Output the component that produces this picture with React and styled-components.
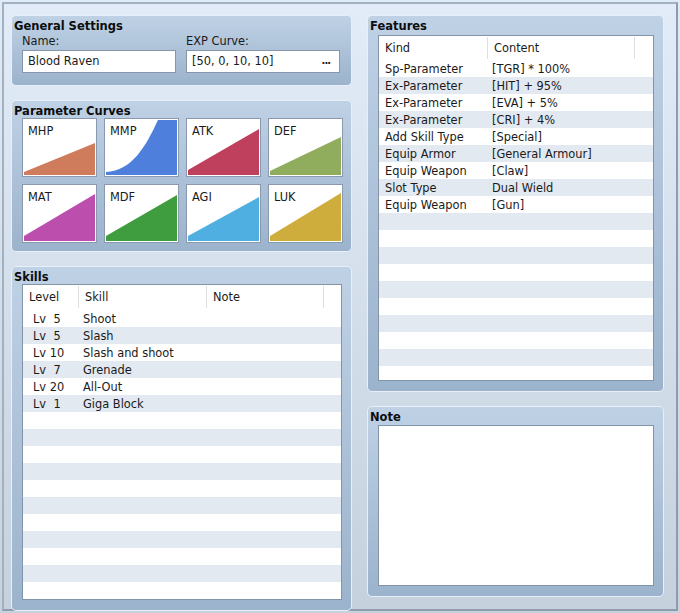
import React from 'react'
import styled, { createGlobalStyle } from 'styled-components'

const GlobalStyle = createGlobalStyle`
    body {
        margin: 0;
        height: 613px;
        background: linear-gradient(#e0ebf8, #c6d2de);
        font-family: "DejaVu Sans", Verdana, sans-serif;
        font-size: 11.4px;
        color: #1a1a1a;
        overflow: hidden;
    }
`

const curves = [
    { name: 'MHP', color: '#cf7c5d', path: 'M0,55 L0,52 L71,23 L71,55 Z' },
    { name: 'MMP', color: '#4f7fdd', path: 'M0,55 L0,52 C26,51 40,26 52,0 L71,0 L71,55 Z' },
    { name: 'ATK', color: '#bf405c', path: 'M0,55 L0,50 L71,9 L71,55 Z' },
    { name: 'DEF', color: '#8fad5d', path: 'M0,55 L0,51 L71,17 L71,55 Z' },
    { name: 'MAT', color: '#bc4eae', path: 'M0,55 L0,50 L71,8 L71,55 Z' },
    { name: 'MDF', color: '#3f9d3f', path: 'M0,55 L0,50 L71,9 L71,55 Z' },
    { name: 'AGI', color: '#4fafe0', path: 'M0,55 L0,50 L71,11 L71,55 Z' },
    { name: 'LUK', color: '#cfad3d', path: 'M0,55 L0,50 L71,7 L71,55 Z' },
]

const skills = [
    ['5', 'Shoot'],
    ['5', 'Slash'],
    ['10', 'Slash and shoot'],
    ['7', 'Grenade'],
    ['20', 'All-Out'],
    ['1', 'Giga Block'],
]

const features = [
    ['Sp-Parameter', '[TGR] * 100%'],
    ['Ex-Parameter', '[HIT] + 95%'],
    ['Ex-Parameter', '[EVA] + 5%'],
    ['Ex-Parameter', '[CRI] + 4%'],
    ['Add Skill Type', '[Special]'],
    ['Equip Armor', '[General Armour]'],
    ['Equip Weapon', '[Claw]'],
    ['Slot Type', 'Dual Wield'],
    ['Equip Weapon', '[Gun]'],
]

const SKILL_COLS = '56px 128px 117px 1fr'
const FEATURE_COLS = '109px 147px 1fr'

function fill(list, count) {
    const rows = [...list]
    while (rows.length < count) rows.push(null)
    return rows
}

function App() {
    return (
        <>
            <GlobalStyle />
            <Frame>
                <Column>
                    <Panel $height={71}>
                        <Title>General Settings</Title>
                        <Fields>
                            <Field>
                                <Label>Name:</Label>
                                <Input>Blood Raven</Input>
                            </Field>
                            <Field>
                                <Label>EXP Curve:</Label>
                                <Input>
                                    [50, 0, 10, 10]
                                    <Dots>...</Dots>
                                </Input>
                            </Field>
                        </Fields>
                    </Panel>
                    <Panel $height={152}>
                        <Title>Parameter Curves</Title>
                        <CurveGrid>
                            {curves.map((c) => (
                                <CurveCard key={c.name}>
                                    <CurveChart viewBox="0 0 71 55" preserveAspectRatio="none">
                                        <path d={c.path} fill={c.color} />
                                    </CurveChart>
                                    <CurveName>{c.name}</CurveName>
                                </CurveCard>
                            ))}
                        </CurveGrid>
                    </Panel>
                    <Panel $grow>
                        <Title>Skills</Title>
                        <ListBox>
                            <HeaderRow $cols={SKILL_COLS} $height={25}>
                                <HeaderCell>Level</HeaderCell>
                                <HeaderCell>Skill</HeaderCell>
                                <HeaderCell>Note</HeaderCell>
                                <HeaderCell $last />
                            </HeaderRow>
                            {fill(skills, 17).map((s, i) => (
                                <Row key={i} $cols={SKILL_COLS} $striped={i % 2 === 1}>
                                    {s && (
                                        <>
                                            <LevelCell>
                                                Lv<LevelNum>{s[0]}</LevelNum>
                                            </LevelCell>
                                            <Cell>{s[1]}</Cell>
                                        </>
                                    )}
                                </Row>
                            ))}
                        </ListBox>
                    </Panel>
                </Column>
                <Column>
                    <Panel $height={377}>
                        <Title>Features</Title>
                        <ListBox $top={2}>
                            <HeaderRow $cols={FEATURE_COLS} $height={24}>
                                <HeaderCell>Kind</HeaderCell>
                                <HeaderCell>Content</HeaderCell>
                                <HeaderCell $last />
                            </HeaderRow>
                            {fill(features, 20).map((f, i) => (
                                <Row key={i} $cols={FEATURE_COLS} $striped={i % 2 === 1}>
                                    {f && (
                                        <>
                                            <Cell $pad={6}>{f[0]}</Cell>
                                            <Cell>{f[1]}</Cell>
                                        </>
                                    )}
                                </Row>
                            ))}
                        </ListBox>
                    </Panel>
                    <Panel $grow>
                        <Title>Note</Title>
                        <NoteBox $top={1} />
                    </Panel>
                </Column>
            </Frame>
        </>
    )
}

export default App

const Frame = styled.div`
    margin: 2px;
    width: 676px;
    height: 609px;
    box-sizing: border-box;
    border: 2px solid;
    border-color: #a3b0c0 #8f9cad #8f9cad #a3b0c0;
    background: linear-gradient(#e1ecf8, #c5d1dd);
    padding: 11px 0 0 7px;
    display: grid;
    grid-template-columns: 341px 297px;
    column-gap: 15px;
`

const Column = styled.div`
    display: flex;
    flex-direction: column;
    gap: 14px;
    height: 582px;
`

const Panel = styled.section`
    box-sizing: border-box;
    height: ${(p) => (p.$height ? `${p.$height}px` : 'auto')};
    flex: ${(p) => (p.$grow ? '1' : 'none')};
    border: 1px solid #e8eff8;
    border-radius: 5px;
    background: linear-gradient(#bfd1e5, #9bb3cc);
    padding: 0 9px 10px 10px;
    display: flex;
    flex-direction: column;
`

const Title = styled.h3`
    margin: 0 0 0 -8px;
    padding-top: 4px;
    height: 13px;
    line-height: 13px;
    font-size: 11.5px;
    font-weight: bold;
    color: #0d0d0d;
`

const Fields = styled.div`
    display: grid;
    grid-template-columns: 154px 154px;
    column-gap: 10px;
`

const Field = styled.div`
    display: flex;
    flex-direction: column;
`

const Label = styled.label`
    line-height: 13px;
    height: 15px;
    padding-top: 2px;
`

const Input = styled.div`
    box-sizing: border-box;
    height: 23px;
    border: 1px solid #8696ab;
    background: #fff;
    padding: 0 5px 1px 5px;
    line-height: 20px;
    display: flex;
    justify-content: space-between;
    align-items: center;
`

const Dots = styled.span`
    font-weight: bold;
    font-size: 10px;
    letter-spacing: -1px;
    margin-right: 4px;
`

const CurveGrid = styled.div`
    display: grid;
    grid-template-columns: repeat(4, 75px);
    grid-auto-rows: 59px;
    gap: 7px;
`

const CurveCard = styled.div`
    position: relative;
    box-sizing: border-box;
    border: 1px solid #8a99ad;
    background: #fff;
`

const CurveChart = styled.svg`
    position: absolute;
    left: 1px;
    top: 1px;
    width: 71px;
    height: 55px;
    display: block;
`

const CurveName = styled.div`
    position: relative;
    padding: 6px 0 0 5px;
    line-height: 13px;
`

const ListBox = styled.div`
    flex: 1;
    margin-top: ${(p) => p.$top || 0}px;
    box-sizing: border-box;
    border: 1px solid #8393a8;
    background: #fff;
    overflow: hidden;
`

const HeaderRow = styled.div`
    display: grid;
    grid-template-columns: ${(p) => p.$cols};
    height: ${(p) => p.$height}px;
`

const HeaderCell = styled.div`
    box-sizing: border-box;
    padding-left: 6px;
    line-height: 22px;
    margin: 1px 0 2px;
    border-right: ${(p) => (p.$last ? 'none' : '1px solid #dcdfe4')};
`

const Row = styled.div`
    display: grid;
    grid-template-columns: ${(p) => p.$cols};
    height: 17px;
    line-height: 19px;
    background: ${(p) => (p.$striped ? '#e3e9f1' : '#fff')};
`

const Cell = styled.div`
    padding-left: ${(p) => p.$pad ?? 4}px;
    white-space: nowrap;
`

const LevelCell = styled.div`
    padding-left: 10px;
    white-space: nowrap;
`

const LevelNum = styled.span`
    display: inline-block;
    width: 16px;
    margin-left: 3px;
    text-align: center;
`

const NoteBox = styled.div`
    flex: 1;
    margin-top: ${(p) => p.$top || 0}px;
    border: 1px solid #8393a8;
    background: #fff;
`
